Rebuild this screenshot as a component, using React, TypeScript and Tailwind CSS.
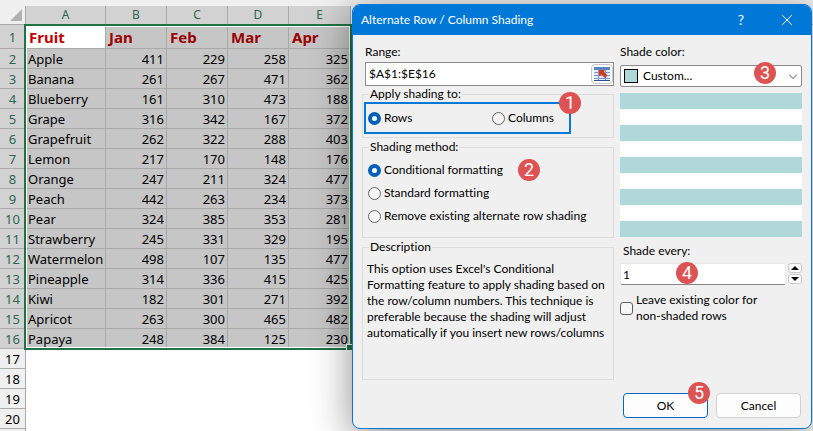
import { useState, type ReactNode } from 'react';
import { clsx } from 'clsx';

const MONTHS = ['Jan', 'Feb', 'Mar', 'Apr'];

const FRUITS: [string, number, number, number, number][] = [
  ['Apple', 411, 229, 258, 325],
  ['Banana', 261, 267, 471, 362],
  ['Blueberry', 161, 310, 473, 188],
  ['Grape', 316, 342, 167, 372],
  ['Grapefruit', 262, 322, 288, 403],
  ['Lemon', 217, 170, 148, 176],
  ['Orange', 247, 211, 324, 477],
  ['Peach', 442, 263, 234, 373],
  ['Pear', 324, 385, 353, 281],
  ['Strawberry', 245, 331, 329, 195],
  ['Watermelon', 498, 107, 135, 477],
  ['Pineapple', 314, 336, 415, 425],
  ['Kiwi', 182, 301, 271, 392],
  ['Apricot', 263, 300, 465, 482],
  ['Papaya', 248, 384, 125, 230],
];

const EMPTY_ROWS = [17, 18, 19, 20];

const METHODS = ['Conditional formatting', 'Standard formatting', 'Remove existing alternate row shading'];

export default function App() {
  return (
    <main className="relative h-screen overflow-hidden bg-white font-['Noto_Sans','Open_Sans',sans-serif] text-black">
      <Sheet />
      <ShadingDialog />
    </main>
  );
}

function Sheet() {
  return (
    <div className="relative bg-[#f0f0f0] pt-1.5">
      <table className="w-full table-fixed border-separate border-spacing-0 bg-white text-[13px] leading-4">
        <colgroup>
          <col className="w-[26px]" />
          <col className="w-20" />
          <col className="w-[61px]" />
          <col className="w-[61px]" />
          <col className="w-[61px]" />
          <col className="w-[62px]" />
          <col />
        </colgroup>
        <thead>
          <tr className="h-[19px]">
            <th className="border-r border-b border-[#ababab] bg-[#f0f0f0] p-0">
              <svg viewBox="0 0 12 12" className="ml-auto mr-[3px] h-3 w-3" aria-hidden>
                <path d="M12 0v12H0z" fill="#b2b2b2" />
              </svg>
            </th>
            {['A', 'B', 'C', 'D', 'E'].map((c) => (
              <th key={c} className="border-r border-b border-[#ababab] bg-[#d2d2d2] p-0 text-[12px] font-normal text-[#2c6650]">
                {c}
              </th>
            ))}
            <th className="border-b border-[#ababab] bg-[#f0f0f0] p-0" />
          </tr>
        </thead>
        <tbody>
          <tr className="h-6 text-[15px] leading-5">
            <RowHead n={1} selected />
            <td className="border-r border-b border-[#a8a8a8] p-0 pl-[3px] font-bold text-[#c00000]">Fruit</td>
            {MONTHS.map((m) => (
              <td key={m} className="border-r border-b border-[#a8a8a8] bg-[#c6c6c6] p-0 pl-[3px] font-bold text-[#990000]">
                {m}
              </td>
            ))}
            <td className="p-0" />
          </tr>
          {FRUITS.map(([name, ...values], i) => (
            <tr key={name} className="h-5">
              <RowHead n={i + 2} selected />
              <td className="border-r border-b border-[#a8a8a8] bg-[#c6c6c6] p-0 pl-0.5 whitespace-nowrap">{name}</td>
              {values.map((v, j) => (
                <td key={j} className="border-r border-b border-[#a8a8a8] bg-[#c6c6c6] p-0 pr-0.5 text-right">
                  {v}
                </td>
              ))}
              <td className="p-0" />
            </tr>
          ))}
          {EMPTY_ROWS.map((n) => (
            <tr key={n} className="h-5">
              <RowHead n={n} />
              <td colSpan={6} className="p-0" />
            </tr>
          ))}
          <tr className="h-5">
            <RowHead />
            <td colSpan={6} className="p-0" />
          </tr>
        </tbody>
      </table>

      {/* selection frame and its fill handle */}
      <div className="pointer-events-none absolute top-6 left-6 h-[326px] w-[328px] border-2 border-[#217346]">
        <div className="h-full border border-white" />
        <div className="absolute -right-0.5 -bottom-0.5 h-1.5 w-1.5 border-t border-l border-white bg-[#217346]" />
      </div>
    </div>
  );
}

function RowHead({ n, selected }: { n?: number; selected?: boolean }) {
  return (
    <th
      scope="row"
      className={clsx(
        'border-r border-b border-[#ababab] p-0 text-center text-[13px] leading-4 font-normal',
        selected ? 'bg-[#d2d2d2] text-[#2c6650]' : 'bg-[#f0f0f0] text-black',
      )}
    >
      {n}
    </th>
  );
}

function ShadingDialog() {
  const [target, setTarget] = useState('Rows');
  const [method, setMethod] = useState(METHODS[0]);
  const [step, setStep] = useState(1);

  return (
    <section
      role="dialog"
      aria-labelledby="dialog-title"
      className="absolute top-1 right-px w-[460px] overflow-hidden rounded-lg border border-[#0078d4] bg-[#f0f0f0] font-['Lato','Noto_Sans',sans-serif] text-[12px] leading-4 [font-variant-ligatures:none] shadow-[0_8px_40px_rgba(0,0,0,0.45)]"
    >
      <header className="flex h-[30px] items-center bg-[#0078d7] pl-2 text-white">
        <h1 id="dialog-title" className="flex-1">Alternate Row / Column Shading</h1>
        <button type="button" aria-label="Help" className="w-11 text-sm">?</button>
        <button type="button" aria-label="Close" className="flex w-12 justify-center">
          <svg viewBox="0 0 10 10" className="h-2.5 w-2.5" stroke="currentColor" aria-hidden>
            <path d="M0 0l10 10M10 0L0 10" />
          </svg>
        </button>
      </header>

      <div className="flex gap-1.5 pt-[9px] pr-[9px] pl-[9px]">
        <div className="flex w-[252px] flex-col">
          <label htmlFor="range" className="pl-[3px]">Range:</label>
          <div className="mt-0.5 ml-[3px] flex h-6 items-center border border-[#8c8c8c] bg-white">
            <input id="range" defaultValue="$A$1:$E$16" className="min-w-0 flex-1 pl-[3px] outline-none" />
            <button
              type="button"
              aria-label="Select range"
              className="flex h-5 w-[22px] items-center justify-center rounded border border-[#c8c8c8] bg-[#fdfdfd]"
            >
              <RangeIcon />
            </button>
          </div>

          <Group title="Apply shading to:" className="h-[52px]">
            <div className="relative ml-px flex h-8 w-[207px] items-center border-2 border-[#0078d7] pl-0.5">
              <div className="w-[124px]">
                <Radio name="target" label="Rows" checked={target === 'Rows'} onSelect={setTarget} />
              </div>
              <Radio name="target" label="Columns" checked={target === 'Columns'} onSelect={setTarget} />
              <Badge n={1} className="-top-3 -right-3" />
            </div>
          </Group>

          <Group title="Shading method:" className="mt-px h-[99px]">
            <div className="relative flex flex-col gap-[7px] pt-[7px] pl-[5px]">
              {METHODS.map((m) => (
                <Radio key={m} name="method" label={m} checked={method === m} onSelect={setMethod} />
              ))}
              <Badge n={2} className="top-1 left-[155px]" />
            </div>
          </Group>

          <Group title="Description" className="mt-px h-[141px]">
            <p className="pt-1.5 pl-1 whitespace-nowrap">
              This option uses Excel's Conditional
              <br />
              Formatting feature to apply shading based on
              <br />
              the row/column numbers. This technique is
              <br />
              preferable because the shading will adjust
              <br />
              automatically if you insert new rows/columns
            </p>
          </Group>
        </div>

        <div className="flex min-w-0 flex-1 flex-col">
          <label htmlFor="color">Shade color:</label>
          <div className="relative mt-[5px] h-[22px]">
            <select
              id="color"
              className="h-full w-full appearance-none rounded-xs border border-[#8a8a8a] bg-white pl-[22px] outline-none"
            >
              <option>Custom...</option>
            </select>
            <span className="pointer-events-none absolute top-1 left-1 h-3.5 w-3.5 border border-black bg-[#b0d8d8]" />
            <svg viewBox="0 0 8 5" className="pointer-events-none absolute top-[9px] right-[5px] h-[5px] w-2" fill="none" stroke="#555" aria-hidden>
              <path d="M0 .5l4 4 4-4" />
            </svg>
            <Badge n={3} className="-top-[3px] right-[26px]" />
          </div>

          <div className="mt-1.5 flex flex-col" aria-hidden>
            {Array.from({ length: 9 }, (_, i) => (
              <div key={i} className={clsx('h-4', i % 2 ? 'bg-white' : 'bg-[#b0d8d8]')} />
            ))}
          </div>

          <label htmlFor="every" className="mt-1.5 pl-[3px]">Shade every:</label>
          <div className="relative mt-1 flex gap-0.5">
            <input
              id="every"
              value={step}
              onChange={(e) => setStep(Number(e.target.value) || 1)}
              className="h-[22px] min-w-0 flex-1 rounded-xs border border-[#e8e8e8] border-b-[#868686] bg-white pl-0.5 outline-none"
            />
            <div className="flex w-3.5 flex-col gap-px">
              <Spin label="Increase" d="M4 0l4 4H0z" onClick={() => setStep(step + 1)} />
              <Spin label="Decrease" d="M0 0h8L4 4z" onClick={() => setStep(Math.max(1, step - 1))} />
            </div>
            <Badge n={4} className="-top-px left-14" />
          </div>

          <label className="mt-[7px] flex items-center gap-[3px]">
            <input type="checkbox" className="h-[13px] w-[13px] appearance-none rounded-[3px] border border-[#5f5f5f] bg-[#f6f6f6] checked:bg-[#005fb8]" />
            <span>
              Leave existing color for
              <br />
              non-shaded rows
            </span>
          </label>
        </div>
      </div>

      <footer className="flex justify-end gap-2 pt-[13px] pr-2.5 pb-2.5">
        <div className="relative">
          <button type="button" className="h-[25px] w-[85px] rounded border border-[#0067c0] bg-[#fdfdfd]">OK</button>
          <Badge n={5} className="-top-[11px] -right-0.5" />
        </div>
        <button type="button" className="h-[25px] w-[85px] rounded border border-[#d0d0d0] bg-[#fdfdfd]">Cancel</button>
      </footer>
    </section>
  );
}

function Group({ title, className, children }: { title: string; className: string; children: ReactNode }) {
  return (
    <fieldset className={clsx('min-w-0 border border-[#dcdcdc]', className)}>
      <legend className="ml-1.5 px-px">{title}</legend>
      {children}
    </fieldset>
  );
}

function Radio({ name, label, checked, onSelect }: {
  name: string;
  label: string;
  checked: boolean;
  onSelect: (value: string) => void;
}) {
  return (
    <label className="flex items-center gap-[3px]">
      <input
        type="radio"
        name={name}
        checked={checked}
        onChange={() => onSelect(label)}
        className="h-[13px] w-[13px] shrink-0 appearance-none rounded-full border border-[#666] bg-[#f6f6f6] checked:border-4 checked:border-[#005fb8] checked:bg-white"
      />
      {label}
    </label>
  );
}

function Spin({ label, d, onClick }: { label: string; d: string; onClick: () => void }) {
  return (
    <button
      type="button"
      aria-label={label}
      onClick={onClick}
      className="flex h-2.5 items-center justify-center rounded-[3px] border border-[#c8c8c8] bg-[#fdfdfd]"
    >
      <svg viewBox="0 0 8 4" className="h-1 w-2" aria-hidden>
        <path d={d} />
      </svg>
    </button>
  );
}

function Badge({ n, className }: { n: number; className: string }) {
  return (
    <span
      className={clsx(
        "absolute flex h-[22px] w-[22px] items-center justify-center rounded-full bg-[#dd5252] font-['Roboto',sans-serif] text-[18px] text-white",
        className,
      )}
    >
      {n}
    </span>
  );
}

function RangeIcon() {
  return (
    <svg viewBox="0 0 16 14" className="h-3.5 w-4 shrink-0" aria-hidden>
      <path d="M0 0h16v14H0z" fill="#e4ebf6" />
      <path d="M0 0h16v3H0z" fill="#5b86c4" />
      <path d="M0 5.5h16M0 8.500h16M0 11.500h16M4.500 3v11M11.500 3v11" stroke="#7d9bca" />
      <path d="M0 13h16v1H0z" fill="#2f4f9c" />
      <path d="M5 3h6L9.800 5l3.700 3.500L11 11 7.500 7.500 5 9.500z" fill="#d63a1e" />
    </svg>
  );
}
